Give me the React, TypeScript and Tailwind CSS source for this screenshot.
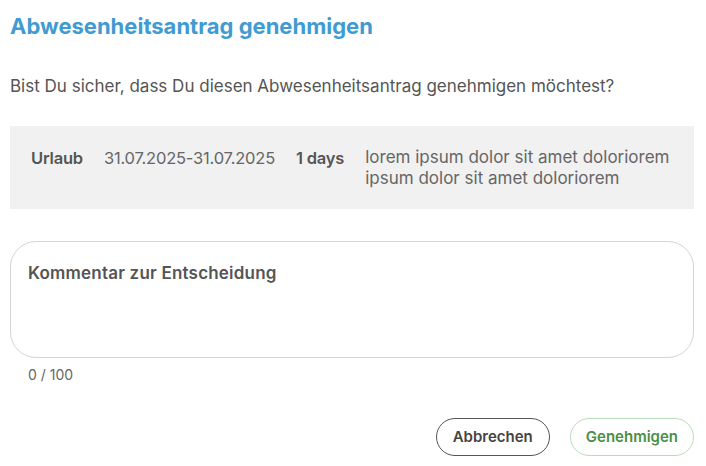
export default function App() {
  return (
    <div className="w-[706px] h-[466px] bg-white font-['Inter',sans-serif] pl-[10px] pr-[12px] pt-[12px]">
      <h2 className="text-[22px] font-bold text-[#3f9bd1] leading-[28px]">
        Abwesenheitsantrag genehmigen
      </h2>
      <p className="mt-[34px] text-[17px] text-[#555] leading-[24px]">
        Bist Du sicher, dass Du diesen Abwesenheitsantrag genehmigen möchtest?
      </p>
      <div className="mt-[28px] bg-[#f1f1f1] flex items-start gap-[21px] pl-[21px] pr-4 pt-[21px] pb-[20px] text-[16.5px] text-[#666] leading-[22px]">
        <span className="font-semibold text-[#555] tracking-[-0.2px]">Urlaub</span>
        <span className="tracking-[-0.2px]">31.07.2025-31.07.2025</span>
        <span className="font-semibold text-[#555] tracking-[-0.2px]">1 days</span>
        <span className="w-[312px] text-[17px] leading-[21px]">
          lorem ipsum dolor sit amet doloriorem ipsum dolor sit amet doloriorem
        </span>
      </div>
      <div className="mt-[32px] h-[117px] rounded-[26px] border border-[#d4d4d4] px-[17px] pt-[19px]">
        <span className="text-[17px] font-semibold text-[#555] leading-[24px] tracking-[0.2px]">
          Kommentar zur Entscheidung
        </span>
      </div>
      <div className="mt-[7px] pl-[18px] text-[14px] text-[#666] leading-[20px]">0 / 100</div>
      <div className="mt-[33px] flex justify-end gap-[20px]">
        <button className="h-[38px] px-[16px] rounded-full border border-[#555] text-[15px] font-semibold text-[#444]">
          Abbrechen
        </button>
        <button className="h-[38px] px-[15px] rounded-full border border-[#b9dcb9] text-[15px] font-semibold text-[#4a8f45]">
          Genehmigen
        </button>
      </div>
    </div>
  );
}
